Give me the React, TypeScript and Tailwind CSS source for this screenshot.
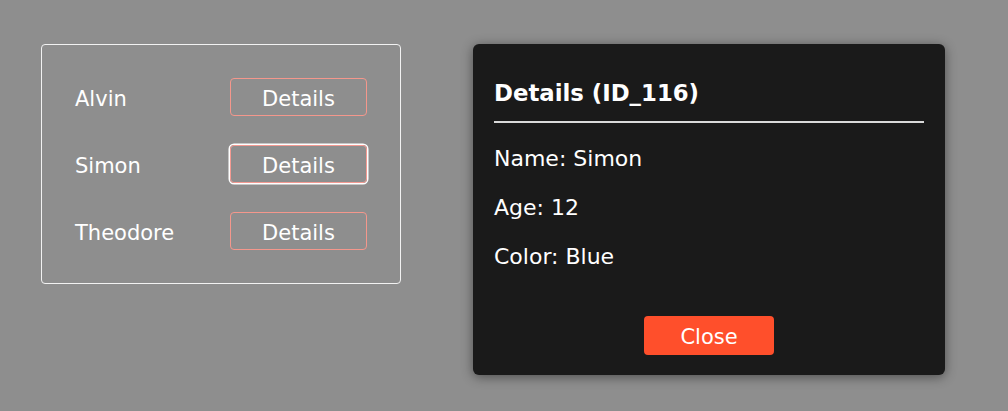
import React from 'react';

const chipmunks = [
  { name: 'Alvin', focused: false },
  { name: 'Simon', focused: true },
  { name: 'Theodore', focused: false },
];

const font = { fontFamily: '"DejaVu Sans", Verdana, sans-serif' };

export default function App() {
  return (
    <div
      className="flex h-[411px] w-[1008px] items-start gap-[72px] bg-[#8e8e8e] pt-[44px] pl-[41px] text-white"
      style={font}
    >
      <div className="flex h-[240px] w-[360px] flex-col justify-center gap-[29px] rounded-[4px] border border-[#f2f2f2] px-[33px]">
        {chipmunks.map((c) => (
          <div key={c.name} className="flex items-center justify-between">
            <span className="pt-[3px] text-[21px] leading-[26px]">{c.name}</span>
            <button
              className={`flex h-[38px] w-[137px] items-center justify-center rounded-[4px] border pt-[3px] text-[21px] leading-[26px] text-white ${
                c.focused
                  ? 'border-[#f49a92] shadow-[0_0_0_1.5px_#ffffff]'
                  : 'border-[#f4978c]'
              }`}
            >
              Details
            </button>
          </div>
        ))}
      </div>

      <div className="flex h-[331px] w-[472px] flex-col rounded-[6px] bg-[#1a1a1a] px-[21px] pt-[36px] pb-[20px] shadow-[0_2px_12px_rgba(0,0,0,0.45)]">
        <h2 className="text-[22.8px] leading-[26px] font-bold">Details (ID_116)</h2>
        <div className="mt-[15px] h-[2px] bg-[#d9d9d9]" />
        <p className="mt-[23px] text-[22px] leading-[26px]">Name: Simon</p>
        <p className="mt-[23px] text-[22px] leading-[26px]">Age: 12</p>
        <p className="mt-[23px] text-[22px] leading-[26px]">Color: Blue</p>
        <div className="mt-auto flex justify-center">
          <button className="h-[39px] w-[130px] rounded-[4px] bg-[#ff4f2b] pt-[2px] text-[21px] leading-[26px] text-white">
            Close
          </button>
        </div>
      </div>
    </div>
  );
}
